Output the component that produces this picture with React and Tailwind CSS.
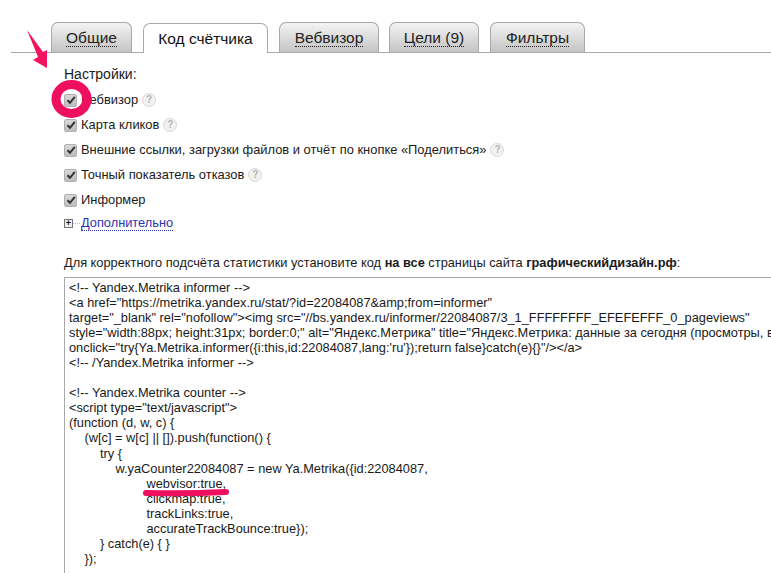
const TABS = [
  { label: 'Общие', cls: 'w-[81px]' },
  { label: 'Код счётчика', cls: 'ml-[11px] w-[125px]', active: true },
  { label: 'Вебвизор', cls: 'ml-[11px] w-[100px]' },
  { label: 'Цели (9)', cls: 'ml-[10px] w-[90px]' },
  { label: 'Фильтры', cls: 'ml-[11px] w-[95px]' },
]

const OPTIONS = [
  { label: 'Вебвизор', help: true },
  { label: 'Карта кликов', help: true },
  { label: 'Внешние ссылки, загрузки файлов и отчёт по кнопке «Поделиться»', help: true },
  { label: 'Точный показатель отказов', help: true },
  { label: 'Информер' },
]

const CODE = `<!-- Yandex.Metrika informer -->
<a href="https://metrika.yandex.ru/stat/?id=22084087&amp;from=informer"
target="_blank" rel="nofollow"><img src="//bs.yandex.ru/informer/22084087/3_1_FFFFFFFF_EFEFEFFF_0_pageviews"
style="width:88px; height:31px; border:0;" alt="Яндекс.Метрика" title="Яндекс.Метрика: данные за сегодня (просмотры, визиты и уникальные посетители)"
onclick="try{Ya.Metrika.informer({i:this,id:22084087,lang:'ru'});return false}catch(e){}"/></a>
<!-- /Yandex.Metrika informer -->

<!-- Yandex.Metrika counter -->
<script type="text/javascript">
(function (d, w, c) {
\t(w[c] = w[c] || []).push(function() {
\t\ttry {
\t\t\tw.yaCounter22084087 = new Ya.Metrika({id:22084087,
\t\t\t\t\twebvisor:true,
\t\t\t\t\tclickmap:true,
\t\t\t\t\ttrackLinks:true,
\t\t\t\t\taccurateTrackBounce:true});
\t\t} catch(e) { }
\t});`

function Help() {
  return (
    <span className="ml-[4px] flex h-[14px] w-[14px] items-center justify-center rounded-full border border-[#d8d8d8] bg-[#f2f2f2] text-[10px] font-bold leading-none text-[#b5b5b5]">
      ?
    </span>
  )
}

function Check() {
  return (
    <span className="mr-[4px] flex h-[13px] w-[13px] shrink-0 items-center justify-center rounded-[2px] border border-[#b0b0b0] bg-gradient-to-b from-[#d8d8d8] to-[#bdbdbd]">
      <svg width="10" height="10" viewBox="0 0 10 10">
        <path d="M1.5 5.2 L4 7.8 L8.8 1.8" fill="none" stroke="#333" strokeWidth="2" />
      </svg>
    </span>
  )
}

export default function App() {
  return (
    <div className="relative h-[573px] w-[771px] overflow-hidden bg-white font-['Liberation_Sans',Arial,sans-serif] text-[12.8px] text-[#1a1a1a]">
      <div className="ml-[11px] mt-[22px] flex h-[31px] items-end border-b border-[#a8a8a8] pl-[40px]">
        {TABS.map((t) =>
          t.active ? (
            <div
              key={t.label}
              className={`${t.cls} relative -mb-px flex h-[30px] items-center justify-center rounded-t-[7px] border border-b-0 border-[#a8a8a8] bg-white text-[15.5px] text-[#111]`}
            >
              {t.label}
            </div>
          ) : (
            <div
              key={t.label}
              className={`${t.cls} flex h-[30px] items-center justify-center rounded-t-[7px] border border-b-0 border-[#a8a8a8] bg-gradient-to-b from-[#f4f4f4] to-[#c4c4c4] text-[15.5px] text-[#222]`}
            >
              <span className="border-b border-dotted border-[#222] leading-[17px]">{t.label}</span>
            </div>
          )
        )}
      </div>

      <div className="pl-[64px]">
        <p className="mt-[14px] text-[14px] leading-[15px]">Настройки:</p>

        <div className="mt-[9px] flex flex-col gap-[7px] text-[12.9px]">
          {OPTIONS.map((o) => (
            <div key={o.label} className="flex h-[18px] items-center">
              <Check />
              <span>{o.label}</span>
              {o.help && <Help />}
            </div>
          ))}
        </div>

        <div className="mt-[5px] flex h-[18px] items-center">
          <span className="flex h-[9px] w-[9px] items-center justify-center border border-[#777] bg-[#eee] text-[9px] font-bold leading-none text-[#111]">
            +
          </span>
          <span className="mr-[1px] w-[7px] border-t border-dotted border-[#bbb]" />
          <span className="border-b border-dotted border-[#2a35b0] leading-[15px] text-[#2a35b0]">Дополнительно</span>
        </div>

        <p className="mt-[23px] leading-[15px]">
          Для корректного подсчёта статистики установите код <b>на все</b> страницы сайта <b>графическийдизайн.рф</b>:
        </p>

        <pre className="mt-[7px] h-[300px] overflow-hidden whitespace-pre border-l border-t border-[#a8a8a8] pl-[4px] pt-[2px] font-['Liberation_Sans',Arial,sans-serif] text-[12.8px] leading-[15.05px] [tab-size:15.5px]">
          {CODE}
        </pre>
      </div>

      {/* pink marks drawn over the screenshot */}
      <svg className="absolute left-0 top-0" width="771" height="573" viewBox="0 0 771 573">
        <path d="M27 30 L43 52 L47 50 L47 68 L33 60 L38 57 Z" fill="#f5125f" />
        <ellipse cx="71.5" cy="99" rx="15.5" ry="14.5" fill="none" stroke="#ee0f5f" strokeWidth="9" />
        <path d="M146 493 Q187 494 226 492" fill="none" stroke="#ee0f5f" strokeWidth="6" strokeLinecap="round" />
      </svg>
    </div>
  )
}
